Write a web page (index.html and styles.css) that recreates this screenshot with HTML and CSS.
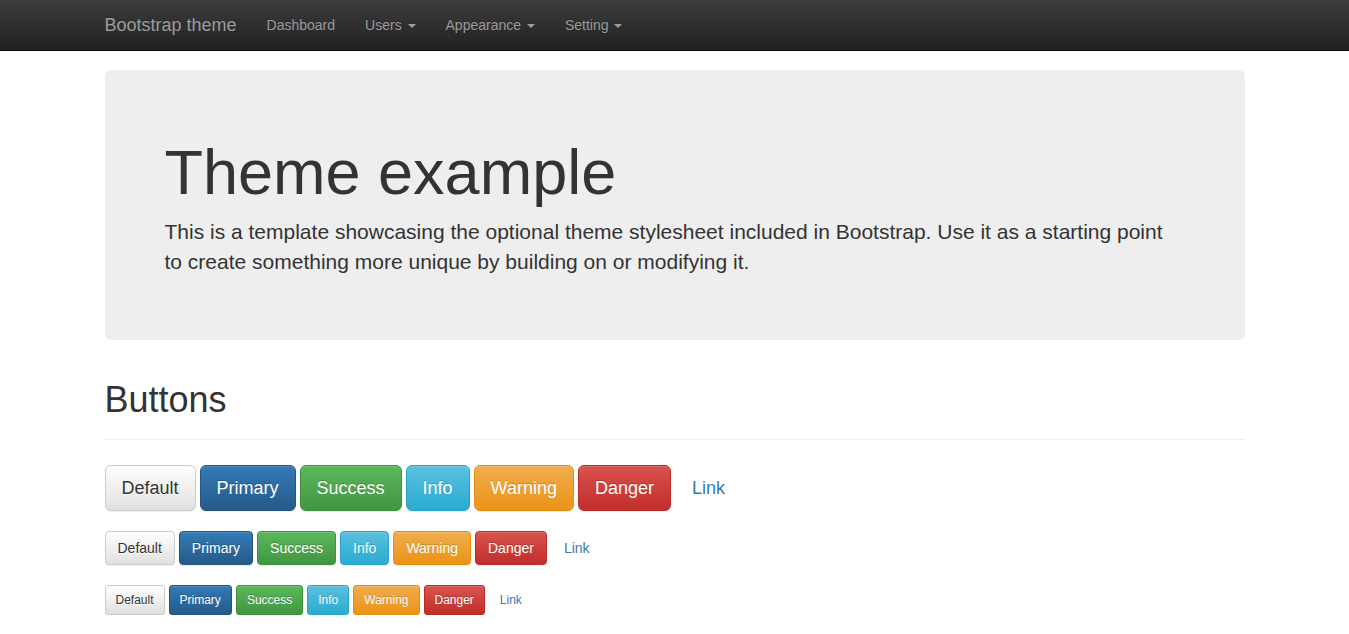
FILE: index.html
```html
<!DOCTYPE html>
<html lang="en">
<head>
<meta charset="utf-8">
<title>Bootstrap theme</title>
<link rel="stylesheet" href="styles.css">
</head>
<body>
<nav class="navbar">
  <div class="container nav-inner">
    <a class="brand" href="#">Bootstrap theme</a>
    <ul class="nav">
      <li><a href="#">Dashboard</a></li>
      <li><a href="#">Users <span class="caret"></span></a></li>
      <li><a href="#">Appearance <span class="caret"></span></a></li>
      <li><a href="#">Setting <span class="caret"></span></a></li>
    </ul>
  </div>
</nav>

<main class="container main">
  <div class="jumbotron">
    <h1>Theme example</h1>
    <p>This is a template showcasing the optional theme stylesheet included in Bootstrap. Use it as a starting point to create something more unique by building on or modifying it.</p>
  </div>

  <div class="page-header">
    <h1>Buttons</h1>
  </div>

  <div class="buttons">
    <div class="btn-row">
      <button class="btn btn-lg btn-default">Default</button>
      <button class="btn btn-lg btn-primary">Primary</button>
      <button class="btn btn-lg btn-success">Success</button>
      <button class="btn btn-lg btn-info">Info</button>
      <button class="btn btn-lg btn-warning">Warning</button>
      <button class="btn btn-lg btn-danger">Danger</button>
      <button class="btn btn-lg btn-link">Link</button>
    </div>
    <div class="btn-row">
      <button class="btn btn-default">Default</button>
      <button class="btn btn-primary">Primary</button>
      <button class="btn btn-success">Success</button>
      <button class="btn btn-info">Info</button>
      <button class="btn btn-warning">Warning</button>
      <button class="btn btn-danger">Danger</button>
      <button class="btn btn-link">Link</button>
    </div>
    <div class="btn-row">
      <button class="btn btn-sm btn-default">Default</button>
      <button class="btn btn-sm btn-primary">Primary</button>
      <button class="btn btn-sm btn-success">Success</button>
      <button class="btn btn-sm btn-info">Info</button>
      <button class="btn btn-sm btn-warning">Warning</button>
      <button class="btn btn-sm btn-danger">Danger</button>
      <button class="btn btn-sm btn-link">Link</button>
    </div>
  </div>
</main>
</body>
</html>
```

FILE: styles.css
```css
* { box-sizing: border-box; }

html, body {
  margin: 0;
  padding: 0;
}

body {
  font-family: "Liberation Sans", Arial, Helvetica, sans-serif;
  font-size: 14px;
  line-height: 1.42857143;
  color: #333;
  background: #fff;
}

a { text-decoration: none; }

.container {
  width: 1170px;
  margin: 0 auto;
  padding: 0 15px;
}

/* Navbar */
.navbar {
  height: 51px;
  background-image: linear-gradient(to bottom, #3c3c3c 0, #222 100%);
  border-bottom: 1px solid #080808;
}

.nav-inner {
  display: flex;
  align-items: stretch;
  height: 50px;
}

.brand {
  display: block;
  height: 50px;
  padding: 15px 15px 15px 0;
  font-size: 18px;
  line-height: 20px;
  color: #9d9d9d;
  text-shadow: 0 -1px 0 rgba(0,0,0,.25);
}

.nav {
  display: flex;
  list-style: none;
  margin: 0;
  padding: 0;
}

.nav a {
  display: block;
  padding: 15px;
  line-height: 20px;
  color: #9d9d9d;
  text-shadow: 0 -1px 0 rgba(0,0,0,.25);
}

.caret {
  display: inline-block;
  width: 0;
  height: 0;
  margin-left: 2px;
  vertical-align: middle;
  border-top: 4px solid;
  border-right: 4px solid transparent;
  border-left: 4px solid transparent;
}

/* Main */
.main {
  padding-top: 19px;
}

.jumbotron {
  background: #eee;
  border-radius: 6px;
  padding: 48px 60px;
  margin-bottom: 40px;
}

.jumbotron h1 {
  margin: 20px 0 10px;
  font-size: 63px;
  font-weight: 500;
  line-height: 1.1;
  color: inherit;
}

.jumbotron p {
  margin: 0 0 15px;
  font-size: 21px;
  font-weight: 200;
  line-height: 30px;
}

.page-header {
  padding-bottom: 9px;
  border-bottom: 1px solid #eee;
  margin-bottom: 0;
}

.page-header h1 {
  margin: 0 0 10px;
  font-size: 36px;
  font-weight: 500;
  line-height: 1.1;
}

/* Buttons */
.buttons {
  display: flex;
  flex-direction: column;
  gap: 20px;
  padding-top: 25px;
}

.btn-row {
  display: flex;
  align-items: center;
  gap: 4px;
}

.btn {
  display: inline-block;
  margin: 0;
  font-family: inherit;
  font-size: 14px;
  font-weight: 400;
  line-height: 20px;
  padding: 6px 12px;
  border: 1px solid transparent;
  border-radius: 4px;
  cursor: pointer;
  white-space: nowrap;
  text-shadow: 0 -1px 0 rgba(0,0,0,.2);
  box-shadow: inset 0 1px 0 rgba(255,255,255,.15), 0 1px 1px rgba(0,0,0,.075);
  color: #fff;
  background-repeat: repeat-x;
}

.btn-lg {
  padding: 10px 16px;
  font-size: 18px;
  line-height: 24px;
  border-radius: 6px;
}

.btn-sm {
  padding: 5px 10px;
  font-size: 12px;
  line-height: 18px;
  border-radius: 3px;
}

.btn-default {
  color: #333;
  text-shadow: 0 1px 0 #fff;
  background-image: linear-gradient(to bottom, #fff 0, #e0e0e0 100%);
  border-color: #ccc;
}

.btn-primary {
  background-image: linear-gradient(to bottom, #337ab7 0, #265a88 100%);
  border-color: #245580;
}

.btn-success {
  background-image: linear-gradient(to bottom, #5cb85c 0, #419641 100%);
  border-color: #3e8f3e;
}

.btn-info {
  background-image: linear-gradient(to bottom, #5bc0de 0, #2aabd2 100%);
  border-color: #28a4c9;
}

.btn-warning {
  background-image: linear-gradient(to bottom, #f0ad4e 0, #eb9316 100%);
  border-color: #e38d13;
}

.btn-danger {
  background-image: linear-gradient(to bottom, #d9534f 0, #c12e2a 100%);
  border-color: #b92c28;
}

.btn-link {
  color: #337ab7;
  background: transparent;
  border-color: transparent;
  box-shadow: none;
  text-shadow: none;
}
```
